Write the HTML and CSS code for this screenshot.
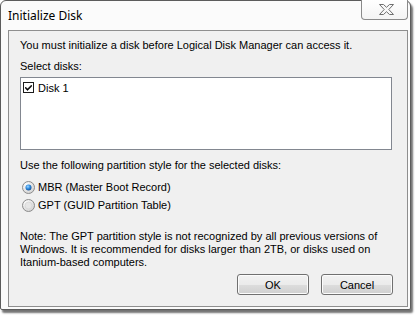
FILE: index.html
```html
<!DOCTYPE html>
<html>
<head>
<meta charset="utf-8">
<link rel="stylesheet" href="styles.css">
</head>
<body>
<div class="window">
  <div class="titlebar">
    <span class="title">Initialize Disk</span>
    <button class="close" aria-label="Close">
      <svg width="15" height="11" viewBox="0 0 15 11">
        <path d="M0.5 0.5 H4.5 L7.5 3.3 L10.5 0.5 H14.5 L9.8 5.5 L14.5 10.5 H10.5 L7.5 7.7 L4.5 10.5 H0.5 L5.2 5.5 Z" fill="#f7f7f7" stroke="#6f6f6f" stroke-width="1" stroke-linejoin="round"/>
      </svg>
    </button>
  </div>
  <div class="client">
    <p class="line first">You must initialize a disk before Logical Disk Manager can access it.</p>
    <p class="line label">Select disks:</p>
    <div class="listbox">
      <div class="item">
        <span class="check">
          <svg width="11" height="11" viewBox="0 0 11 11">
            <rect x="0.5" y="0.5" width="10" height="10" fill="#fff" stroke="#1c1c1c"/>
            <path d="M2.5 5 L4.5 7 L8.5 3 L8.5 4.6 L4.5 8.6 L2.5 6.6 Z" fill="#000" stroke="#000" stroke-width="0.6"/>
          </svg>
        </span>
        <span>Disk 1</span>
      </div>
    </div>
    <p class="line label2">Use the following partition style for the selected disks:</p>
    <div class="radios">
      <label class="radio">
        <svg width="13" height="13" viewBox="0 0 13 13">
          <defs>
            <radialGradient id="rb" cx="0.35" cy="0.3" r="0.8">
              <stop offset="0" stop-color="#ffffff"/>
              <stop offset="1" stop-color="#cfcfcf"/>
            </radialGradient>
            <radialGradient id="dot" cx="0.4" cy="0.35" r="0.7">
              <stop offset="0" stop-color="#9fd7ff"/>
              <stop offset="0.5" stop-color="#2d8be0"/>
              <stop offset="1" stop-color="#154b8c"/>
            </radialGradient>
          </defs>
          <circle cx="6.5" cy="6.5" r="6" fill="url(#rb)" stroke="#8c8c8c"/>
          <circle cx="6.5" cy="6.5" r="3" fill="url(#dot)"/>
        </svg>
        <span>MBR (Master Boot Record)</span>
      </label>
      <label class="radio">
        <svg width="13" height="13" viewBox="0 0 13 13">
          <circle cx="6.5" cy="6.5" r="6" fill="url(#rb)" stroke="#8c8c8c"/>
          <circle cx="6.5" cy="6.5" r="3.5" fill="#e6e6e6" stroke="#cfcfcf" stroke-width="0.6"/>
        </svg>
        <span>GPT (GUID Partition Table)</span>
      </label>
    </div>
    <p class="note">Note: The GPT partition style is not recognized by all previous versions of Windows. It is recommended for disks larger than 2TB, or disks used on Itanium-based computers.</p>
    <div class="buttons">
      <button class="btn">OK</button>
      <button class="btn">Cancel</button>
    </div>
  </div>
</div>
</body>
</html>
```
FILE: styles.css
```css
html, body {
  margin: 0;
  padding: 0;
  background: #ffffff;
}

body {
  width: 415px;
  height: 316px;
  overflow: hidden;
  font-family: "Liberation Sans", Arial, sans-serif;
  font-size: 11px;
  color: #000;
}

.window {
  width: 411px;
  box-sizing: border-box;
  border: 1px solid #5c5c5c;
  border-radius: 6px 6px 2px 2px;
  background: #fbfbfb;
  padding: 0 2px 2px 7px;
  box-shadow: 2px 3px 2px rgba(0, 0, 0, 0.55);
}

.titlebar {
  height: 29px;
  display: flex;
  align-items: flex-start;
  justify-content: space-between;
}

.title {
  font-family: "Noto Sans", "Open Sans", sans-serif;
  font-size: 12px;
  line-height: 14px;
  margin-top: 8px;
  color: #000;
}

.close {
  width: 47px;
  height: 20px;
  margin: -1px 0 0 0;
  padding: 0;
  border: 1px solid #8a8a8a;
  border-top: none;
  border-radius: 0 0 4px 4px;
  background: linear-gradient(#ffffff, #f4f4f4);
  display: flex;
  align-items: center;
  justify-content: center;
}

.close svg {
  display: block;
  flex: none;
  margin: 0 0 0 3px;
}

.client {
  border: 1px solid #8e8e8e;
  background: #f0f0f0;
  padding: 8px 0 11px 11px;
  display: flex;
  flex-direction: column;
}

.line, .note {
  margin: 0;
  line-height: 13px;
  white-space: nowrap;
}

.label {
  margin-top: 8px;
}

.listbox {
  margin-top: 4px;
  width: 372px;
  height: 73px;
  box-sizing: border-box;
  border: 1px solid #828790;
  background: #ffffff;
  padding: 4px 0 0 2px;
}

.item {
  display: flex;
  align-items: center;
  gap: 4px;
  height: 11px;
}

.check svg {
  display: block;
}

.label2 {
  margin-top: 9px;
}

.radios {
  margin-top: 6px;
  display: flex;
  flex-direction: column;
}

.radio {
  height: 18px;
  display: flex;
  align-items: center;
  gap: 3px;
  padding-left: 2px;
}

.radio svg {
  display: block;
}

.note {
  margin-top: 16px;
  width: 380px;
  white-space: normal;
}

.buttons {
  margin-top: 5px;
  display: flex;
  justify-content: flex-end;
  gap: 12px;
  padding-right: 14px;
}

.btn {
  width: 72px;
  height: 21px;
  box-sizing: border-box;
  border: 1px solid #707070;
  border-radius: 3px;
  box-shadow: inset 0 0 0 1px #fcfcfc;
  background: linear-gradient(#f2f2f2 0%, #ebebeb 50%, #dddddd 51%, #cfcfcf 100%);
  font-family: "Liberation Sans", Arial, sans-serif;
  font-size: 11px;
  color: #000;
  padding: 0;
}
```
